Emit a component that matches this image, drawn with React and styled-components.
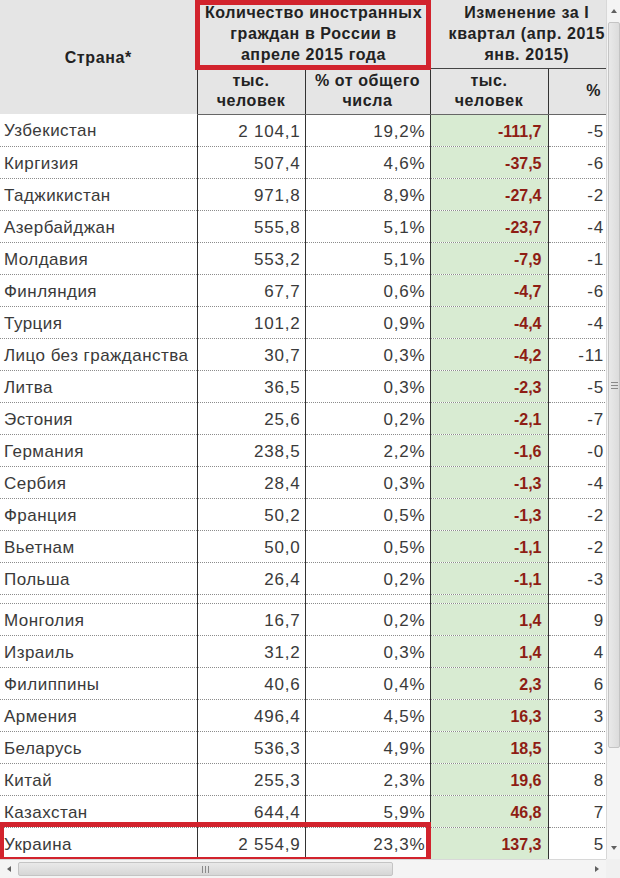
import React from 'react';
import styled, { createGlobalStyle, css } from 'styled-components';

const GlobalStyle = createGlobalStyle`
  html, body { margin:0; padding:0; background:#fff; }
  body { font-family:"Liberation Sans", Arial, sans-serif; }
`

const Frame = styled.div`
  width:620px;
  height:878px;
  display:grid;
  grid-template-columns:606px 14px;
  grid-template-rows:859px 19px;
  overflow:hidden;
  background:#fff;
`
const Viewport = styled.div`
  position:relative;
  overflow:hidden;
`
const Table = styled.table`
  border-collapse:collapse;
  table-layout:fixed;
  width:623px;
  font-size:17px;
  letter-spacing:0.8px;
  color:#3a3a3a;
`
const HeadRow = styled.tr`
  height:${p => p.$h}px;
`
const Th = styled.th`
  background:#e5e5e5;
  color:#222;
  font-size:16px;
  font-weight:bold;
  line-height:21px;
  letter-spacing:0.6px;
  text-align:center;
  white-space:nowrap;
  overflow:hidden;
  padding:0 1px;
  ${p => p.$sub && css`
    line-height:20px;
    border-top:1px solid #444;
    border-bottom:1px solid #666;
  `}
  ${p => p.$divide && css`border-left:1px solid #333;`}
  ${p => p.$tail && css`text-align:right; padding-right:22px;`}
`
const Row = styled.tr`
  height:${p => p.$h || 32}px;
`
const Td = styled.td`
  padding:3px 4px 0 4px;
  text-align:right;
  white-space:nowrap;
  overflow:hidden;
  border-bottom:1px dotted #8c8c8c;
  ${p => p.$divide && css`border-left:1px solid #333;`}
  ${p => p.$country && css`text-align:left; padding-left:4px; letter-spacing:0.45px;`}
  ${p => p.$green && css`background:#d8ebd2;`}
  ${p => p.$change && css`
    color:#8e1d14;
    font-weight:bold;
    font-size:16px;
    letter-spacing:0;
    padding-right:6px;
  `}
  ${p => p.$tail && css`padding-right:19px;`}
  ${p => p.$spacer && css`padding:0;`}
`
const Highlight = styled.div`
  position:absolute;
  top:${p => p.$top}px;
  left:${p => p.$left}px;
  width:${p => p.$w}px;
  height:${p => p.$h}px;
  box-sizing:border-box;
  border:5px solid #d2232d;
  pointer-events:none;
`

const VScroll = styled.div`
  background:#f4f4f4;
  border-left:1px solid #d8d8d8;
  display:flex;
  flex-direction:column;
`
const HScroll = styled.div`
  background:#f4f4f4;
  border-top:1px solid #d8d8d8;
  display:flex;
  align-items:stretch;
`
const Corner = styled.div`
  background:#f0f0f0;
`
const ArrowBox = styled.div`
  flex:0 0 ${p => p.$size}px;
  display:flex;
  align-items:center;
  justify-content:center;
`
const Tri = styled.span`
  width:0;
  height:0;
  border:3px solid transparent;
  ${p => p.$dir === 'up' && css`border-top-width:0; border-bottom:4px solid #606060;`}
  ${p => p.$dir === 'down' && css`border-bottom-width:0; border-top:4px solid #606060;`}
  ${p => p.$dir === 'left' && css`border-left-width:0; border-right:4px solid #606060;`}
  ${p => p.$dir === 'right' && css`border-right-width:0; border-left:4px solid #606060;`}
`
const Thumb = styled.div`
  display:flex;
  align-items:center;
  justify-content:center;
  box-sizing:border-box;
  border:1px solid #c4c4c4;
  border-radius:2px;
  ${p => p.$vertical ? css`
    height:726px;
    margin:0 0 0 1px;
    background:linear-gradient(90deg, #e9e9e9, #dcdcdc);
  ` : css`
    width:375px;
    margin:2px 0 2px 0;
    background:linear-gradient(180deg, #e9e9e9, #d6d6d6);
  `}
`
const Grip = styled.div`
  width:7px;
  height:7px;
  background:repeating-linear-gradient(${p => p.$vertical ? '180deg' : '90deg'}, #8a8a8a 0 1px, transparent 1px 3px);
`
const Fill = styled.div`
  flex:1;
`

const top = [
  ['Узбекистан', '2 104,1', '19,2%', '-111,7', '-5'],
  ['Киргизия', '507,4', '4,6%', '-37,5', '-6'],
  ['Таджикистан', '971,8', '8,9%', '-27,4', '-2'],
  ['Азербайджан', '555,8', '5,1%', '-23,7', '-4'],
  ['Молдавия', '553,2', '5,1%', '-7,9', '-1'],
  ['Финляндия', '67,7', '0,6%', '-4,7', '-6'],
  ['Турция', '101,2', '0,9%', '-4,4', '-4'],
  ['Лицо без гражданства', '30,7', '0,3%', '-4,2', '-11'],
  ['Литва', '36,5', '0,3%', '-2,3', '-5'],
  ['Эстония', '25,6', '0,2%', '-2,1', '-7'],
  ['Германия', '238,5', '2,2%', '-1,6', '-0'],
  ['Сербия', '28,4', '0,3%', '-1,3', '-4'],
  ['Франция', '50,2', '0,5%', '-1,3', '-2'],
  ['Вьетнам', '50,0', '0,5%', '-1,1', '-2'],
  ['Польша', '26,4', '0,2%', '-1,1', '-3'],
]

const bottom = [
  ['Монголия', '16,7', '0,2%', '1,4', '9'],
  ['Израиль', '31,2', '0,3%', '1,4', '4'],
  ['Филиппины', '40,6', '0,4%', '2,3', '6'],
  ['Армения', '496,4', '4,5%', '16,3', '3'],
  ['Беларусь', '536,3', '4,9%', '18,5', '3'],
  ['Китай', '255,3', '2,3%', '19,6', '8'],
  ['Казахстан', '644,4', '5,9%', '46,8', '7'],
  ['Украина', '2 554,9', '23,3%', '137,3', '5'],
]

const DataRow = ({ row }) => (
  <Row>
    <Td $country>{row[0]}</Td>
    <Td $divide>{row[1]}</Td>
    <Td $divide>{row[2]}</Td>
    <Td $divide $green $change>{row[3]}</Td>
    <Td $divide $tail>{row[4]}</Td>
  </Row>
)

const App = () => {
  return (
    <>
      <GlobalStyle />
      <Frame>
        <Viewport>
          <Table>
            <colgroup>
              <col style={{ width: 197 }} />
              <col style={{ width: 108 }} />
              <col style={{ width: 125 }} />
              <col style={{ width: 118 }} />
              <col style={{ width: 75 }} />
            </colgroup>
            <thead>
              <HeadRow $h={68}>
                <Th rowSpan={2}>Страна*</Th>
                <Th colSpan={2} $divide>
                  Количество иностранных<br />граждан в России в<br />апреле 2015 года
                </Th>
                <Th colSpan={2} $divide>
                  Изменение за I<br />квартал (апр. 2015<br />янв. 2015)
                </Th>
              </HeadRow>
              <HeadRow $h={46}>
                <Th $sub $divide>тыс.<br />человек</Th>
                <Th $sub $divide>% от общего<br />числа</Th>
                <Th $sub $divide>тыс.<br />человек</Th>
                <Th $sub $divide $tail>%</Th>
              </HeadRow>
            </thead>
            <tbody>
              {top.map(r => <DataRow key={r[0]} row={r} />)}
              <Row $h={9}>
                <Td $spacer />
                <Td $spacer $divide />
                <Td $spacer $divide />
                <Td $spacer $divide $green />
                <Td $spacer $divide />
              </Row>
              {bottom.map(r => <DataRow key={r[0]} row={r} />)}
            </tbody>
          </Table>
          <Highlight $top={0} $left={195} $w={236} $h={70} />
          <Highlight $top={822} $left={-1} $w={432} $h={40} />
        </Viewport>
        <VScroll>
          <ArrowBox $size={22}><Tri $dir="up" /></ArrowBox>
          <Thumb $vertical><Grip $vertical /></Thumb>
          <Fill />
          <ArrowBox $size={22}><Tri $dir="down" /></ArrowBox>
        </VScroll>
        <HScroll>
          <ArrowBox $size={18}><Tri $dir="left" /></ArrowBox>
          <Thumb><Grip /></Thumb>
          <Fill />
          <ArrowBox $size={18}><Tri $dir="right" /></ArrowBox>
        </HScroll>
        <Corner />
      </Frame>
    </>
  )
}

export default App;
